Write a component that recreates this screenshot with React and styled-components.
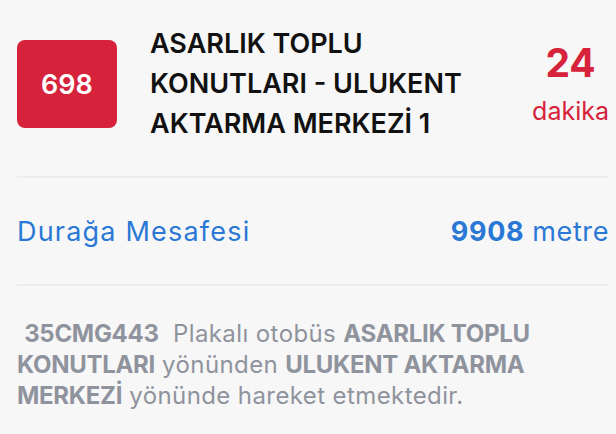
import React from 'react';
import styled, { createGlobalStyle } from 'styled-components';

const GlobalStyle = createGlobalStyle`
  html, body {
    margin: 0;
    padding: 0;
    background: #f7f7f7;
  }
  body {
    font-family: Inter, "Noto Sans", sans-serif;
  }
`;

const Card = styled.div`
  padding: 0 7px 0 17px;
  background: #f7f7f7;
`;

const Header = styled.div`
  display: flex;
  align-items: center;
  box-sizing: border-box;
  height: 178px;
  padding-bottom: 8px;
  border-bottom: 2px solid #ececec;
`;

const LineBadge = styled.div`
  flex: none;
  width: 100px;
  height: 88px;
  border-radius: 8px;
  background: #d6223b;
  color: #fff;
  display: flex;
  align-items: center;
  justify-content: center;
  font-size: 27px;
  font-weight: 600;
`;

const RouteName = styled.div`
  flex: 1;
  margin-left: 33px;
  max-width: 340px;
  color: #111;
  font-size: 27px;
  font-weight: 600;
  line-height: 40px;
`;

const Eta = styled.div`
  margin-left: auto;
  display: flex;
  flex-direction: column;
  align-items: center;
  color: #d6223b;
`;

const EtaValue = styled.span`
  font-size: 39px;
  font-weight: 700;
  line-height: 42px;
`;

const EtaUnit = styled.span`
  margin-top: 12px;
  font-size: 25px;
  line-height: 30px;
`;

const DistanceRow = styled.div`
  display: flex;
  align-items: center;
  justify-content: space-between;
  box-sizing: border-box;
  height: 108px;
  border-bottom: 2px solid #ececec;
  color: #2a78d6;
  font-size: 27px;
  letter-spacing: 0.6px;
`;

const DistanceLabel = styled.span`
  letter-spacing: 1.2px;
`;

const Strong = styled.b`
  font-weight: 700;
`;

const Description = styled.p`
  margin: 0;
  padding-top: 32px;
  color: #8f939d;
  font-size: 24px;
  line-height: 31px;
  letter-spacing: 0.4px;
  white-space: pre-wrap;

  b {
    font-weight: 700;
    letter-spacing: -0.3px;
  }
`;

export default function App() {
  return (
    <>
      <GlobalStyle />
      <Card>
        <Header>
          <LineBadge>698</LineBadge>
          <RouteName>ASARLIK TOPLU KONUTLARI - ULUKENT AKTARMA MERKEZİ 1</RouteName>
          <Eta>
            <EtaValue>24</EtaValue>
            <EtaUnit>dakika</EtaUnit>
          </Eta>
        </Header>
        <DistanceRow>
          <DistanceLabel>Durağa Mesafesi</DistanceLabel>
          <span>
            <Strong>9908</Strong> metre
          </span>
        </DistanceRow>
        <Description>
          {' '}<b>35CMG443</b>{'  '}Plakalı otobüs <b>ASARLIK TOPLU KONUTLARI</b> yönünden{' '}
          <b>ULUKENT AKTARMA MERKEZİ</b> yönünde hareket etmektedir.
        </Description>
      </Card>
    </>
  );
}
